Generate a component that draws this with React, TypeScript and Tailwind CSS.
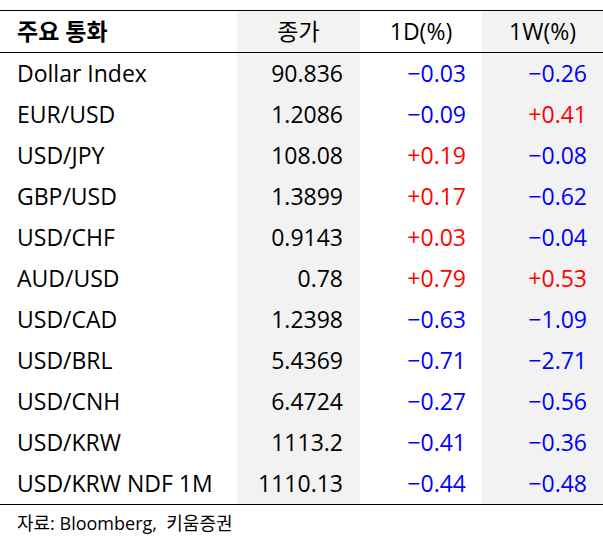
import React from "react";

type Row = { name: string; close: string; d: string; w: string };

const rows: Row[] = [
  { name: "Dollar Index", close: "90.836", d: "-0.03", w: "-0.26" },
  { name: "EUR/USD", close: "1.2086", d: "-0.09", w: "+0.41" },
  { name: "USD/JPY", close: "108.08", d: "+0.19", w: "-0.08" },
  { name: "GBP/USD", close: "1.3899", d: "+0.17", w: "-0.62" },
  { name: "USD/CHF", close: "0.9143", d: "+0.03", w: "-0.04" },
  { name: "AUD/USD", close: "0.78", d: "+0.79", w: "+0.53" },
  { name: "USD/CAD", close: "1.2398", d: "-0.63", w: "-1.09" },
  { name: "USD/BRL", close: "5.4369", d: "-0.71", w: "-2.71" },
  { name: "USD/CNH", close: "6.4724", d: "-0.27", w: "-0.56" },
  { name: "USD/KRW", close: "1113.2", d: "-0.41", w: "-0.36" },
  { name: "USD/KRW NDF 1M", close: "1110.13", d: "-0.44", w: "-0.48" },
];

function Change({ v }: { v: string }) {
  const neg = v.startsWith("-");
  return (
    <span className={neg ? "text-[#0000ff]" : "text-[#ff0000]"}>
      {neg ? "\u2212" + v.slice(1) : v}
    </span>
  );
}

export default function App() {
  return (
    <div
      className="w-[603px] h-[549px] bg-white pt-[10px] text-black"
      style={{ fontFamily: '"Open Sans", "Noto Sans CJK KR", sans-serif' }}
    >
      <div className="border-t border-b border-black">
        <div className="grid grid-cols-[237px_123px_122px_121px] h-[42px] border-b border-black text-[23px] leading-none">
          <div className="flex items-center pl-[17px] font-bold">주요 통화</div>
          <div className="flex items-center justify-center bg-[#f2f2f2]">종가</div>
          <div className="flex items-center justify-center">1D(%)</div>
          <div className="flex items-center justify-center bg-[#f2f2f2]">1W(%)</div>
        </div>
        {rows.map((r) => (
          <div
            key={r.name}
            className="grid grid-cols-[237px_123px_122px_121px] h-[41px] text-[23px] leading-none"
          >
            <div className="flex items-center pl-[17px]">{r.name}</div>
            <div className="flex items-center justify-end pr-[17px] bg-[#f2f2f2]">{r.close}</div>
            <div className="flex items-center justify-end pr-[16px]">
              <Change v={r.d} />
            </div>
            <div className="flex items-center justify-end pr-[16px] bg-[#f2f2f2]">
              <Change v={r.w} />
            </div>
          </div>
        ))}
      </div>
      <div className="pl-[17px] pt-[7px] text-[18px] leading-[22px]">
        자료: Bloomberg,{"\u00a0\u00a0"}키움증권
      </div>
    </div>
  );
}
